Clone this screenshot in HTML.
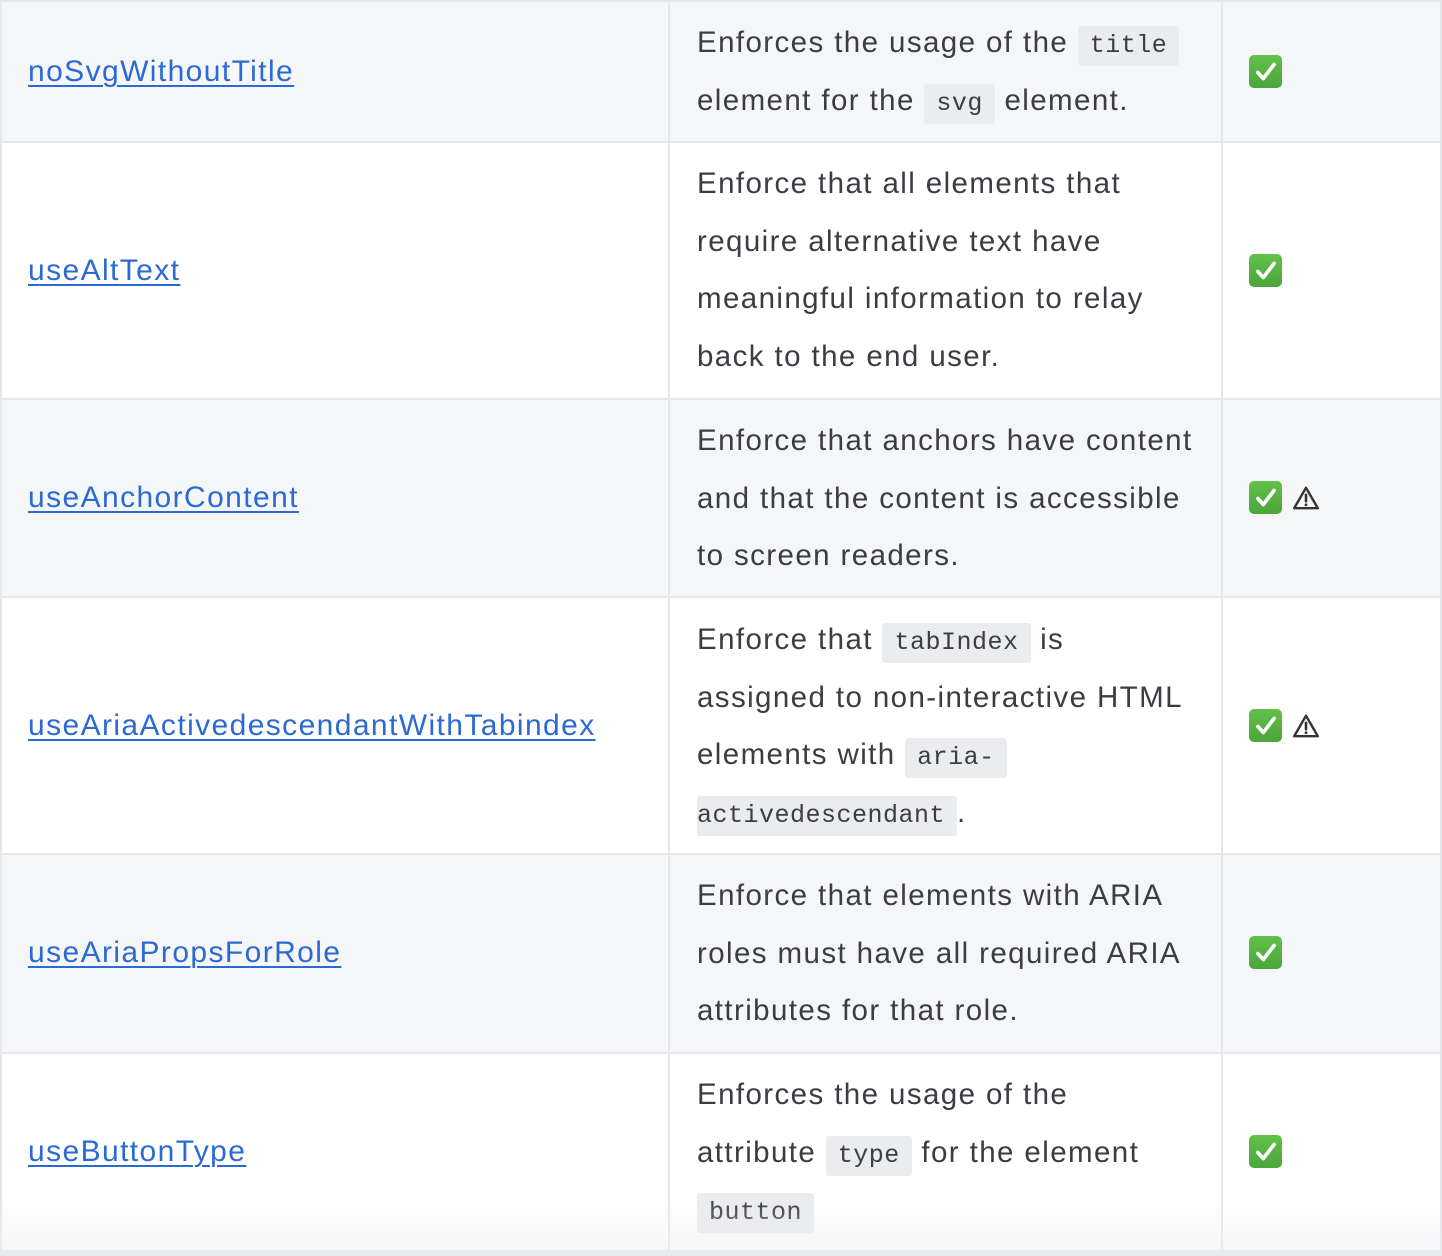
<!DOCTYPE html>
<html><head><meta charset="utf-8"><style>
*{margin:0;padding:0;box-sizing:border-box}
body{width:1442px;height:1256px;overflow:hidden;background:#fff;font-family:"Liberation Sans",sans-serif;color:#3c3c43;position:relative}
.row{position:absolute;left:0;width:1442px;border-top:2px solid #e6e7eb}
.alt{background:#f5f6f8}
.vl{position:absolute;top:0;bottom:0;width:2px;background:#e6e7eb}
.link{position:absolute;left:28px;font-size:30px;letter-spacing:1.4px;color:#2b6ad4;text-decoration:underline;text-decoration-thickness:2px;text-underline-offset:4px;white-space:nowrap;line-height:40px}
.desc{position:absolute;left:697px;font-size:29.5px;line-height:57.5px;white-space:nowrap;letter-spacing:1.4px}
code{font-family:"Liberation Mono",monospace;font-size:25px;background:#ebecf0;padding:5px 12px;border-radius:3px;letter-spacing:0.5px;line-height:30px;display:inline-block;vertical-align:baseline}
.ic{position:absolute;left:1249px;display:flex;gap:10px;align-items:center}
.chk{width:33px;height:33px;border-radius:5px;background:linear-gradient(#63c14a,#4ba53a);display:flex;align-items:center;justify-content:center}
.fade{position:absolute;left:0;top:1200px;width:1442px;height:56px;background:linear-gradient(rgba(255,255,255,0),rgba(236,237,240,0.6));pointer-events:none}
</style></head><body>
<div class="row alt" style="top:0;height:143px"></div>
<div class="row" style="top:141px;height:258px"></div>
<div class="row alt" style="top:398px;height:200px"></div>
<div class="row" style="top:596px;height:258px"></div>
<div class="row alt" style="top:853px;height:200px"></div>
<div class="row" style="top:1052px;height:204px"></div>
<div class="vl" style="left:0"></div>
<div class="vl" style="left:668px"></div>
<div class="vl" style="left:1221px"></div>
<div class="vl" style="left:1440px"></div>

<a class="link" style="top:52px">noSvgWithoutTitle</a>
<a class="link" style="top:251px">useAltText</a>
<a class="link" style="top:478px">useAnchorContent</a>
<a class="link" style="top:706px">useAriaActivedescendantWithTabindex</a>
<a class="link" style="top:933px">useAriaPropsForRole</a>
<a class="link" style="top:1132px">useButtonType</a>

<div class="desc" style="top:14px">Enforces the usage of the <code>title</code><br>element for the <code>svg</code> element.</div>
<div class="desc" style="top:155px">Enforce that all elements that<br>require alternative text have<br>meaningful information to relay<br>back to the end user.</div>
<div class="desc" style="top:412px">Enforce that anchors have content<br>and that the content is accessible<br>to screen readers.</div>
<div class="desc" style="top:611px">Enforce that <code>tabIndex</code> is<br>assigned to non-interactive HTML<br>elements with <code>aria-</code><br><code style="padding-left:0">activedescendant</code>.</div>
<div class="desc" style="top:867px">Enforce that elements with ARIA<br>roles must have all required ARIA<br>attributes for that role.</div>
<div class="desc" style="top:1066px">Enforces the usage of the<br>attribute <code>type</code> for the element<br><code>button</code></div>

<svg width="0" height="0" style="position:absolute"><defs>
<symbol id="ck" viewBox="0 0 24 24"><path d="M4.5 12.5l5 5.5L19.5 5" fill="none" stroke="#fff" stroke-width="3.4" stroke-linecap="round" stroke-linejoin="round"/></symbol>
<symbol id="wn" viewBox="0 0 26 24"><path d="M13 2.5L24 21.5H2Z" fill="none" stroke="#333" stroke-width="2.2" stroke-linejoin="round"/><path d="M13 9v6" stroke="#333" stroke-width="2.4" stroke-linecap="round"/><circle cx="13" cy="18.3" r="1.3" fill="#333"/></symbol>
</defs></svg>

<div class="ic" style="top:55px"><div class="chk"><svg width="26" height="26"><use href="#ck"/></svg></div></div>
<div class="ic" style="top:254px"><div class="chk"><svg width="26" height="26"><use href="#ck"/></svg></div></div>
<div class="ic" style="top:481px"><div class="chk"><svg width="26" height="26"><use href="#ck"/></svg></div><svg width="28" height="26"><use href="#wn"/></svg></div>
<div class="ic" style="top:709px"><div class="chk"><svg width="26" height="26"><use href="#ck"/></svg></div><svg width="28" height="26"><use href="#wn"/></svg></div>
<div class="ic" style="top:936px"><div class="chk"><svg width="26" height="26"><use href="#ck"/></svg></div></div>
<div class="ic" style="top:1135px"><div class="chk"><svg width="26" height="26"><use href="#ck"/></svg></div></div>
<div class="fade"></div>
<div style="position:absolute;left:0;top:1250px;width:1442px;height:6px;background:#e9eaee"></div>
</body></html>
